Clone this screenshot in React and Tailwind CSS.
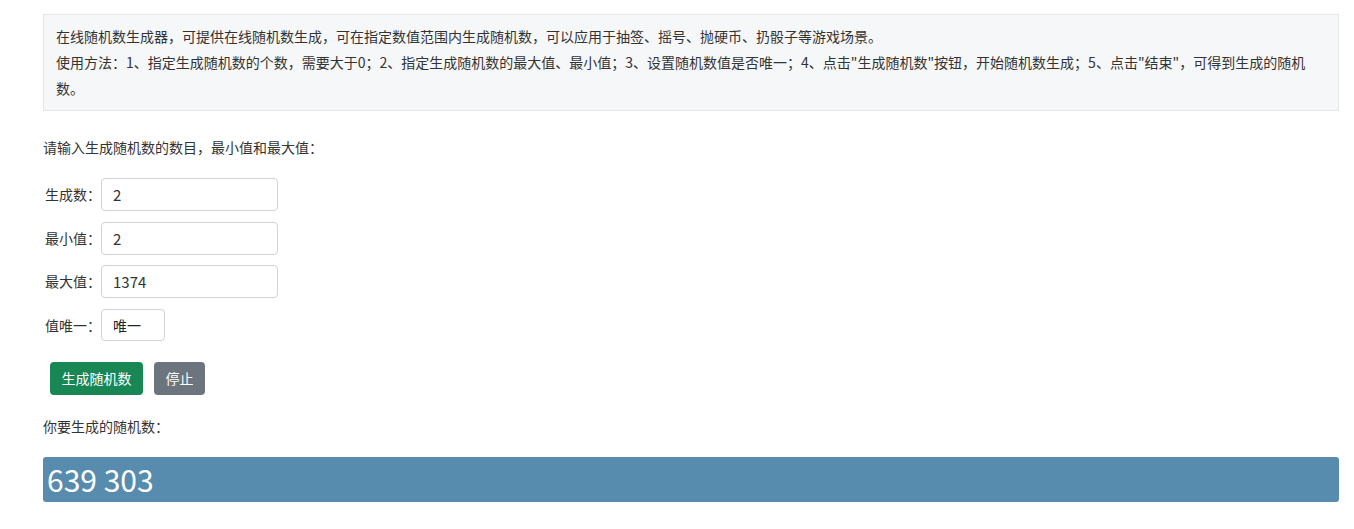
import React, { useState } from 'react';

const FONT = { fontFamily: '"Noto Sans CJK SC", "Noto Sans", sans-serif' };

const FieldRow = ({ label, value, className = '' }) => (
  <div className={`flex items-center ${className}`}>
    <span className="w-[58px] pl-[2px] text-[14px] text-[#333]">{label}</span>
    <input
      className="h-[33px] w-[177px] rounded-[4px] border border-[#ced4da] bg-white pl-[11px] pr-3 text-[15px] text-[#333] outline-none"
      defaultValue={value}
    />
  </div>
);

const App = () => {
  const [result] = useState('639 303');

  return (
    <div className="min-h-[529px] bg-white" style={FONT}>
      <div className="ml-[43px] w-[1296px] pt-[14px]">
        <div className="border border-[#e5e6e8] bg-[#f6f7f9] px-3 pt-[8px] pb-[9px] text-[14px] leading-[26px] text-[#333]">
          <p>在线随机数生成器，可提供在线随机数生成，可在指定数值范围内生成随机数，可以应用于抽签、摇号、抛硬币、扔骰子等游戏场景。</p>
          <p>
            使用方法：1、指定生成随机数的个数，需要大于0；2、指定生成随机数的最大值、最小值；3、设置随机数值是否唯一；4、点击"生成随机数"按钮，开始随机数生成；5、点击"结束"，可得到生成的随机数。
          </p>
        </div>

        <p className="mt-[26px] text-[14px] leading-[20px] text-[#333]">请输入生成随机数的数目，最小值和最大值：</p>

        <FieldRow label="生成数：" value="2" className="mt-[21px]" />
        <FieldRow label="最小值：" value="2" className="mt-[11px]" />
        <FieldRow label="最大值：" value="1374" className="mt-[10px]" />
        <div className="mt-[11px] flex items-center">
          <span className="w-[58px] pl-[2px] text-[14px] text-[#333]">值唯一：</span>
          <div className="flex h-[32px] w-[64px] items-center rounded-[4px] border border-[#ced4da] bg-white pl-[11px] text-[14px] text-[#222]">
            唯一
          </div>
        </div>

        <div className="mt-[21px] ml-[7px] flex gap-[11px]">
          <button className="h-[33px] w-[93px] rounded-[4px] bg-[#198754] text-[14px] text-white">生成随机数</button>
          <button className="h-[33px] w-[51px] rounded-[4px] bg-[#6c757d] text-[14px] text-white">停止</button>
        </div>

        <p className="mt-[21px] text-[14px] leading-[20px] text-[#333]">你要生成的随机数：</p>

        <div className="mt-[21px] flex h-[45px] items-center rounded-[3px] bg-[#578cae] pl-[4px] text-[30px] text-white">
          {result}
        </div>
      </div>
    </div>
  );
};

export default App;
